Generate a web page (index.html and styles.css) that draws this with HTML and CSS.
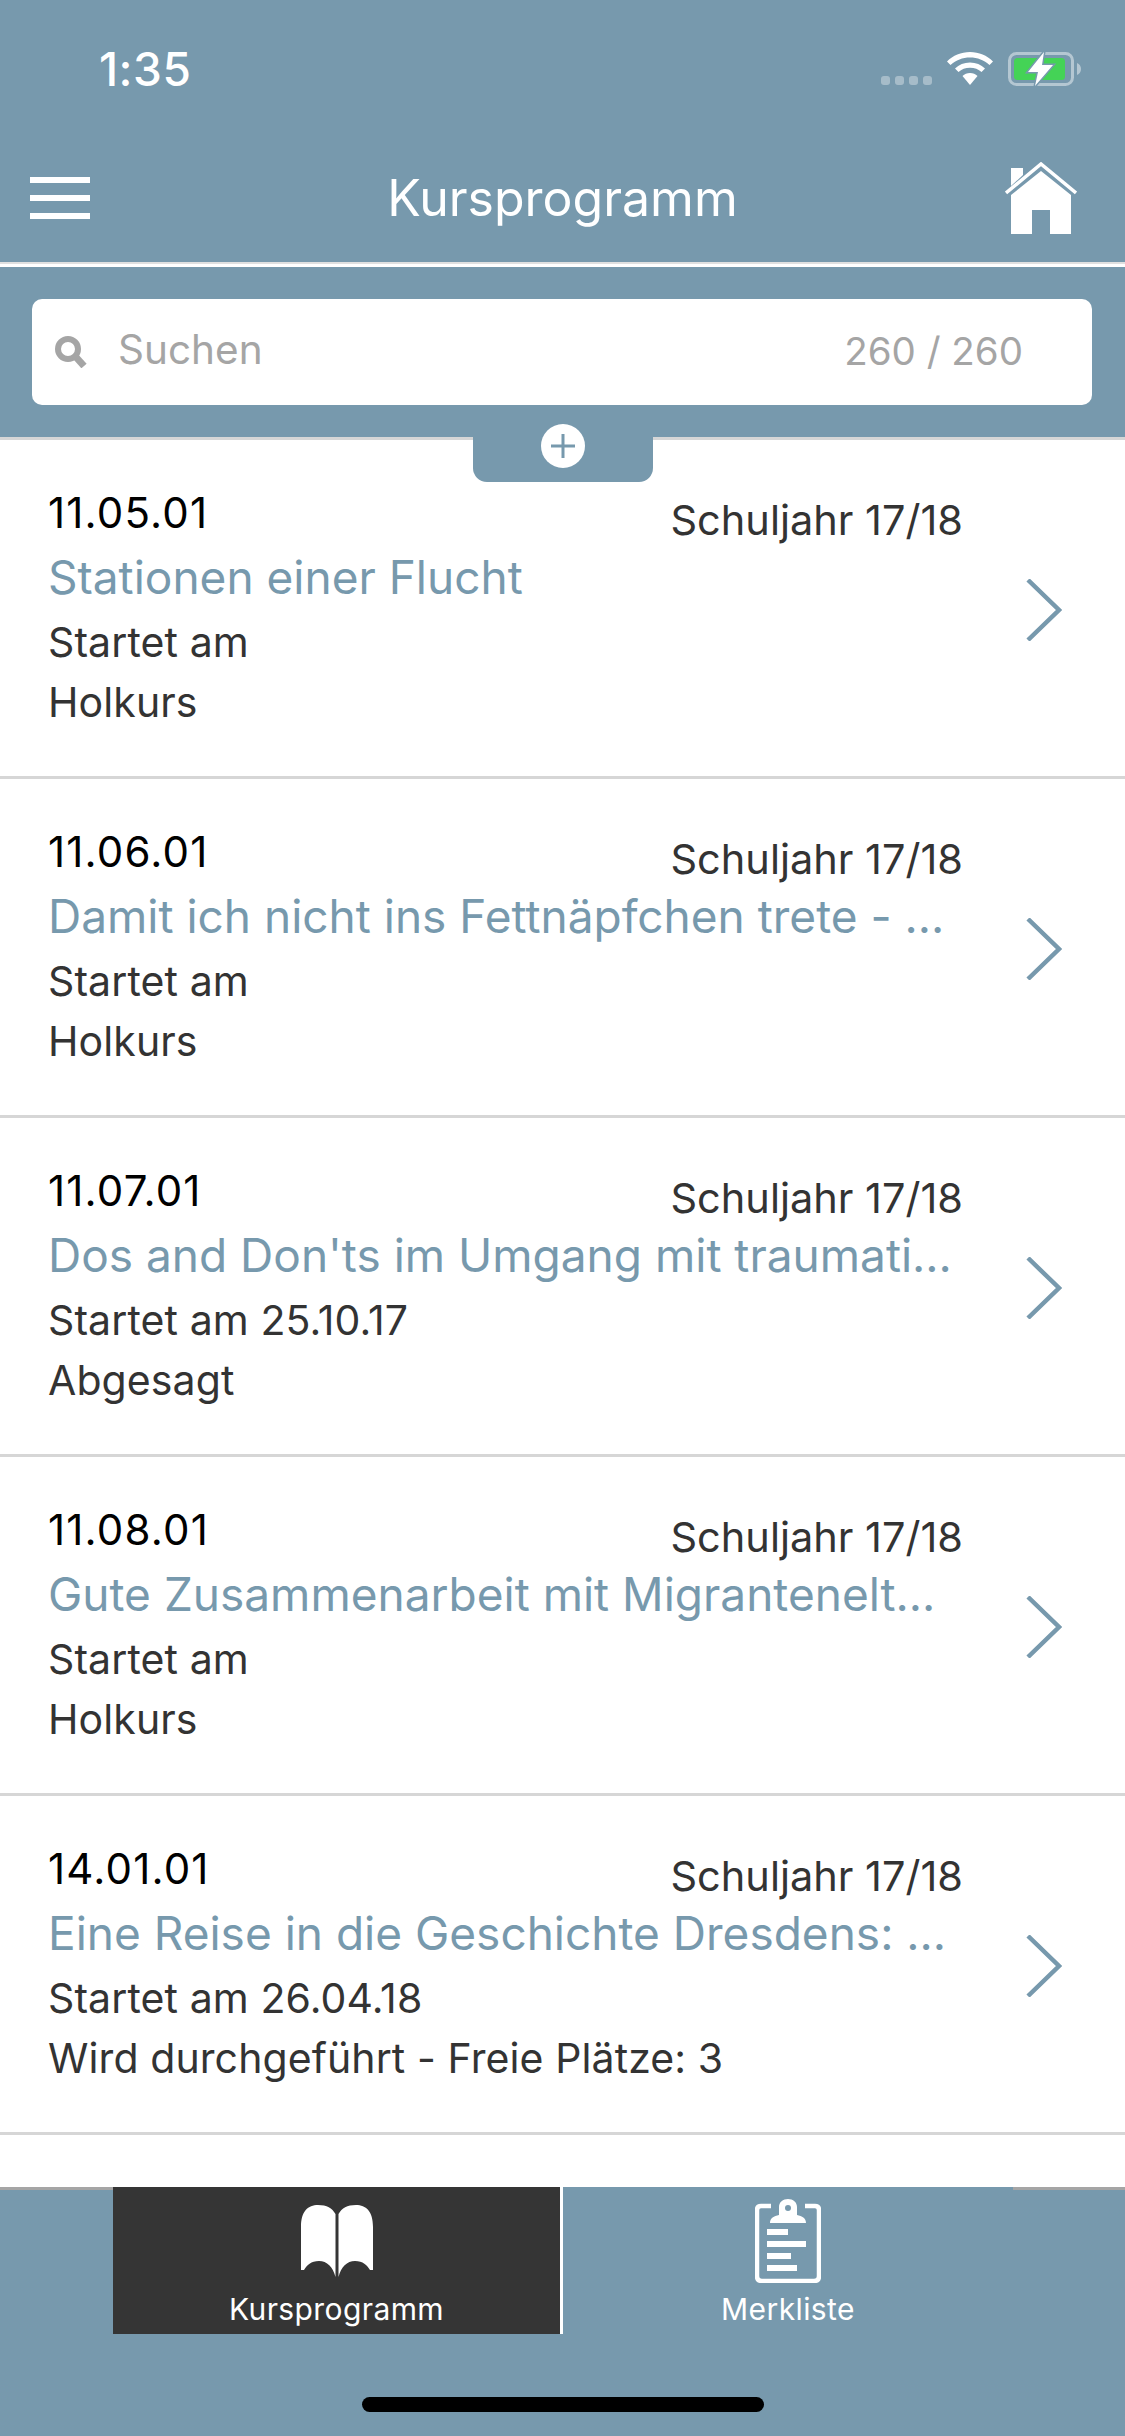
FILE: index.html
```html
<!DOCTYPE html>
<html lang="de">
    <head>
        <meta charset="UTF-8" />
        <meta name="viewport" content="width=device-width, initial-scale=1.0" />
        <title>Kursprogramm</title>
        <link rel="stylesheet" href="styles.css">
    </head>
    <body>
        <div class="app">
            <header class="top">
                <div class="status-bar">
                    <span class="clock">1:35</span>
                    <div class="status-icons">
                        <div class="signal"><i></i><i></i><i></i><i></i></div>
                        <svg class="wifi" width="46" height="33" viewBox="0 0 46 33">
                            <path d="M23 0C14 0 6 3.500 0 9.500L3.500 13C9 8 15.500 5.500 23 5.500S37 8 42.500 13L46 9.500C40 3.500 32 0 23 0Z" fill="#fff"/>
                            <path d="M23 10.500C17 10.500 12 12.700 8 16.500L11.500 20C14.500 17.300 18.500 15.800 23 15.800S31.500 17.300 34.500 20L38 16.500C34 12.700 29 10.500 23 10.500Z" fill="#fff"/>
                            <path d="M23 21C20 21 17.500 22 15.500 24L23 33L30.500 24C28.500 22 26 21 23 21Z" fill="#fff"/>
                        </svg>
                        <svg class="battery" width="73" height="34" viewBox="0 0 73 34">
                            <rect x="1.500" y="1.500" width="63" height="31" rx="7" fill="none" stroke="#fff" stroke-opacity="0.45" stroke-width="3"/>
                            <path d="M69 11C71.500 12 73 14 73 17S71.500 22 69 23Z" fill="#fff" fill-opacity="0.45"/>
                            <rect x="6" y="6" width="51" height="22" rx="3.500" fill="#44d356"/>
                            <path d="M36 0L20 20H30L27 34L45 13H34Z" fill="#fff" stroke="#7799ad" stroke-width="3" paint-order="stroke"/>
                        </svg>
                    </div>
                </div>
                <nav class="nav-bar">
                    <div class="burger"><i></i><i></i><i></i></div>
                    <h1 class="nav-title">Kursprogramm</h1>
                    <svg class="home" width="72" height="72" viewBox="0 0 72 72">
                        <path d="M6 6H18V13L6 24Z" fill="#fff"/>
                        <path d="M1 31L36 2L71 31" fill="none" stroke="#fff" stroke-width="3.500"/>
                        <path d="M36 9L66 33V72H45V48H27V72H6V33Z" fill="#fff"/>
                    </svg>
                </nav>
                <div class="search-area">
                    <div class="search-box">
                        <svg class="search-icon" width="32" height="32" viewBox="0 0 32 32">
                            <circle cx="13" cy="13" r="10" fill="none" stroke="#a5a5a5" stroke-width="6"/>
                            <path d="M20 20L29 30" stroke="#a5a5a5" stroke-width="7"/>
                        </svg>
                        <span class="search-text">Suchen</span>
                        <span class="search-count">260 / 260</span>
                    </div>
                    <div class="filter-tab">
                        <svg width="44" height="44" viewBox="0 0 44 44">
                            <circle cx="22" cy="22" r="22" fill="#fff"/>
                            <path d="M22 10V34M10 22H34" stroke="#7799ad" stroke-width="3"/>
                        </svg>
                    </div>
                </div>
            </header>

            <main class="course-list">
                <article class="course">
                    <div class="course-main">
                        <div class="course-head"><span class="course-code">11.05.01</span><span class="course-year">Schuljahr 17/18</span></div>
                        <p class="course-title">Stationen einer Flucht</p>
                        <p class="course-line">Startet am</p>
                        <p class="course-line">Holkurs</p>
                    </div>
                    <svg class="chevron" width="36" height="62" viewBox="0 0 36 62"><path d="M2 1L33 31L2 61" fill="none" stroke="#7799ad" stroke-width="4.500"/></svg>
                </article>
                <article class="course">
                    <div class="course-main">
                        <div class="course-head"><span class="course-code">11.06.01</span><span class="course-year">Schuljahr 17/18</span></div>
                        <p class="course-title">Damit ich nicht ins Fettnäpfchen trete - ...</p>
                        <p class="course-line">Startet am</p>
                        <p class="course-line">Holkurs</p>
                    </div>
                    <svg class="chevron" width="36" height="62" viewBox="0 0 36 62"><path d="M2 1L33 31L2 61" fill="none" stroke="#7799ad" stroke-width="4.500"/></svg>
                </article>
                <article class="course">
                    <div class="course-main">
                        <div class="course-head"><span class="course-code">11.07.01</span><span class="course-year">Schuljahr 17/18</span></div>
                        <p class="course-title">Dos and Don'ts im Umgang mit traumati...</p>
                        <p class="course-line">Startet am 25.10.17</p>
                        <p class="course-line">Abgesagt</p>
                    </div>
                    <svg class="chevron" width="36" height="62" viewBox="0 0 36 62"><path d="M2 1L33 31L2 61" fill="none" stroke="#7799ad" stroke-width="4.500"/></svg>
                </article>
                <article class="course">
                    <div class="course-main">
                        <div class="course-head"><span class="course-code">11.08.01</span><span class="course-year">Schuljahr 17/18</span></div>
                        <p class="course-title">Gute Zusammenarbeit mit Migrantenelt...</p>
                        <p class="course-line">Startet am</p>
                        <p class="course-line">Holkurs</p>
                    </div>
                    <svg class="chevron" width="36" height="62" viewBox="0 0 36 62"><path d="M2 1L33 31L2 61" fill="none" stroke="#7799ad" stroke-width="4.500"/></svg>
                </article>
                <article class="course">
                    <div class="course-main">
                        <div class="course-head"><span class="course-code">14.01.01</span><span class="course-year">Schuljahr 17/18</span></div>
                        <p class="course-title">Eine Reise in die Geschichte Dresdens: ...</p>
                        <p class="course-line">Startet am 26.04.18</p>
                        <p class="course-line">Wird durchgeführt - Freie Plätze: 3</p>
                    </div>
                    <svg class="chevron" width="36" height="62" viewBox="0 0 36 62"><path d="M2 1L33 31L2 61" fill="none" stroke="#7799ad" stroke-width="4.500"/></svg>
                </article>
            </main>

            <footer class="bottom">
                <div class="tabs">
                    <div class="tab tab-active">
                        <svg class="tab-icon" width="72" height="72" viewBox="0 0 72 72">
                            <path d="M0 22C0 6 7 0 17 0C26 0 31 3 34.500 9V72C32 62 26 56 18 56C10 56 6 60 3 65H0Z" fill="#fff"/>
                            <path d="M72 22C72 6 65 0 55 0C46 0 41 3 37.500 9V72C40 62 46 56 54 56C62 56 66 60 69 65H72Z" fill="#fff"/>
                        </svg>
                        <span class="tab-label">Kursprogramm</span>
                    </div>
                    <div class="tab">
                        <svg class="tab-icon clipboard" width="66" height="84" viewBox="0 0 66 84">
                            <path d="M16 7H6Q2 7 2 11V77Q2 82 7 82H59Q64 82 64 77V11Q64 7 60 7H50" fill="none" stroke="#fff" stroke-width="4.500"/>
                            <path d="M15 24C15 19 19 17 24 16V8C24 3 28 0 33 0S42 3 42 8V16C47 17 51 19 51 24Z" fill="#fff"/>
                            <circle cx="33" cy="9" r="3" fill="#7799ad"/>
                            <rect x="12" y="30" width="21" height="6" fill="#fff"/>
                            <rect x="12" y="42" width="39" height="6" fill="#fff"/>
                            <rect x="12" y="54" width="24" height="6" fill="#fff"/>
                            <rect x="12" y="66" width="30" height="6" fill="#fff"/>
                        </svg>
                        <span class="tab-label">Merkliste</span>
                    </div>
                </div>
                <div class="home-indicator"></div>
            </footer>
        </div>
    </body>
</html>
```

FILE: styles.css
```css
body {
    margin: 0;
    font-family: 'Inter', 'Liberation Sans', sans-serif;
    background-color: #fff;
}

.app {
    width: 1125px;
    height: 2436px;
    display: flex;
    flex-direction: column;
    overflow: hidden;
}

.top {
    background-color: #7799ad;
    color: #fff;
}

.status-bar {
    height: 134px;
    box-sizing: border-box;
    padding: 45px 44px 0 99px;
    display: flex;
    justify-content: space-between;
    align-items: flex-start;
}

.clock {
    font-size: 46px;
    line-height: 48px;
    font-weight: 500;
    letter-spacing: 0.5px;
}

.status-icons {
    display: flex;
    align-items: flex-start;
    padding-top: 7px;
}

.signal {
    display: flex;
    gap: 5px;
    margin: 24px 15px 0 0;
}

.signal i {
    width: 9px;
    height: 9px;
    border-radius: 3px;
    background-color: rgba(255, 255, 255, 0.35);
}

.battery {
    margin-left: 15px;
}

.nav-bar {
    height: 128px;
    box-sizing: border-box;
    padding: 28px 48px 0 30px;
    display: grid;
    grid-template-columns: 1fr auto 1fr;
    align-items: start;
}

.burger {
    display: flex;
    flex-direction: column;
    gap: 12px;
    margin-top: 15px;
}

.burger i {
    width: 60px;
    height: 6px;
    background-color: #fff;
}

.nav-title {
    margin: 7px 0 0 18px;
    font-size: 50px;
    line-height: 58px;
    font-weight: 400;
}

.home {
    justify-self: end;
}

.search-area {
    position: relative;
    height: 175px;
    box-sizing: border-box;
    padding: 35px 33px 0 32px;
    border-top: 2px solid #e0e0e0;
    box-shadow: inset 0 3px 0 #fff;
}

.search-box {
    height: 106px;
    box-sizing: border-box;
    padding: 0 69px 0 23px;
    display: flex;
    align-items: center;
    background-color: #fff;
    border-radius: 10px;
    color: #a5a5a5;
}

.search-text {
    margin: 0 0 5px 31px;
    flex: 1;
    font-size: 40.5px;
}

.search-count {
    margin-bottom: 2px;
    font-size: 38.5px;
}

.filter-tab {
    position: absolute;
    left: 473px;
    top: 170px;
    width: 180px;
    height: 48px;
    display: flex;
    justify-content: center;
    align-items: flex-start;
    background-color: #7799ad;
    border-radius: 0 0 14px 14px;
    z-index: 1;
}

.filter-tab svg {
    margin-top: -10px;
}

.course-list {
    flex: 1;
    border-top: 3px solid #d6d6d6;
}

.course {
    height: 339px;
    box-sizing: border-box;
    padding: 48px 63px 0 48px;
    display: flex;
    align-items: flex-start;
    border-bottom: 3px solid #d6d6d6;
}

.course-main {
    flex: 1;
    margin-right: 17px;
}

.course-head {
    display: flex;
    justify-content: space-between;
    padding-right: 46px;
}

.course-code {
    font-size: 42px;
    line-height: 50px;
    letter-spacing: 1.2px;
    color: #000;
}

.course-year {
    margin-top: 7px;
    font-size: 41.5px;
    line-height: 50px;
    color: #333;
}

.course-title {
    margin: 3px 0 0;
    font-size: 46px;
    line-height: 58px;
    color: #7799ad;
    white-space: nowrap;
}

.course-line {
    margin: 0;
    font-size: 41px;
    line-height: 60px;
    letter-spacing: 0.1px;
    color: #333;
}

.course-title + .course-line {
    margin-top: 6px;
}

.chevron {
    margin-top: 91px;
}

.bottom {
    height: 249px;
    background-color: #7799ad;
    box-shadow: inset 0 3px 0 #a5a5a5;
    color: #fff;
}

.tabs {
    display: flex;
    height: 147px;
    padding: 0 112px 0 113px;
}

.tab {
    flex: 1;
    display: flex;
    flex-direction: column;
    align-items: center;
    background-color: #7799ad;
}

.tab-active {
    flex: 0 0 447px;
    background-color: #353535;
    border-right: 3px solid #fff;
}

.tab-icon {
    margin-top: 18px;
}

.clipboard {
    margin-top: 12px;
}

.tab-label {
    margin-top: 15px;
    font-size: 30px;
    line-height: 34px;
    letter-spacing: 0.4px;
}

.clipboard + .tab-label {
    margin-top: 9px;
}

.home-indicator {
    width: 402px;
    height: 15px;
    margin: 63px auto 0;
    background-color: #000;
    border-radius: 8px;
}
```
